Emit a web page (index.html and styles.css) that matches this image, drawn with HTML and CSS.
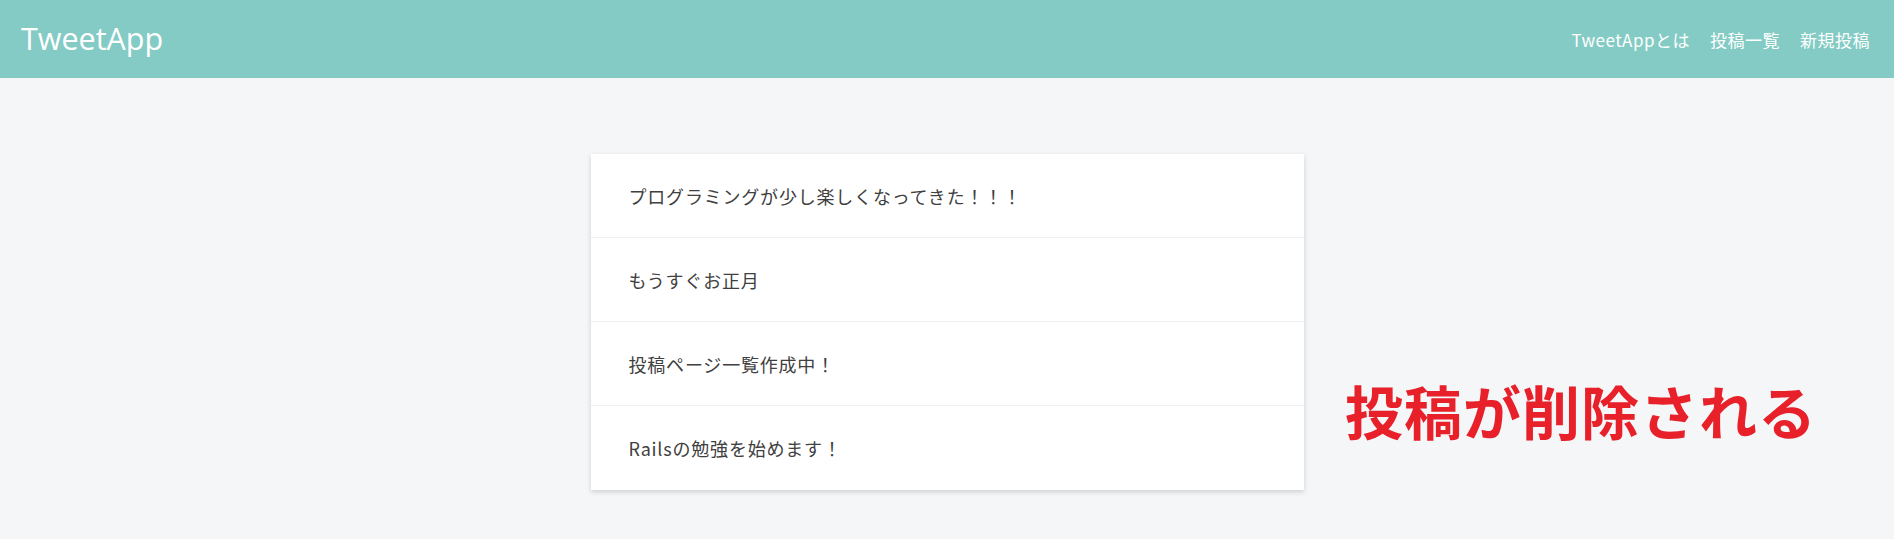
FILE: index.html
```html
<!DOCTYPE html>
<html lang="ja">
<head>
<meta charset="utf-8">
<title>TweetApp</title>
<link rel="stylesheet" href="styles.css">
</head>
<body>
<header class="header">
  <div class="logo">TweetApp</div>
  <nav class="nav">
    <a class="nav-item" href="#">TweetAppとは</a>
    <a class="nav-item" href="#">投稿一覧</a>
    <a class="nav-item" href="#">新規投稿</a>
  </nav>
</header>
<main class="main">
  <div class="posts">
    <div class="post">プログラミングが少し楽しくなってきた！！！</div>
    <div class="post">もうすぐお正月</div>
    <div class="post">投稿ページ一覧作成中！</div>
    <div class="post">Railsの勉強を始めます！</div>
  </div>
  <div class="note">投稿が削除される</div>
</main>
</body>
</html>
```

FILE: styles.css
```css
html, body {
  margin: 0;
  padding: 0;
}
body {
  background: #f5f6f8;
  font-family: "Open Sans", "Noto Sans CJK JP", sans-serif;
  color: #3a3a3a;
  height: 539px;
  overflow: hidden;
}
.header {
  height: 78px;
  background: #83cbc4;
  display: flex;
  align-items: center;
  justify-content: space-between;
  padding: 0 24px 0 21px;
}
.logo {
  color: #fff;
  font-size: 30.5px;
  line-height: 1;
  margin-top: -2px;
}
.nav {
  display: flex;
  gap: 20px;
}
.nav-item {
  color: #fff;
  text-decoration: none;
  font-size: 17px;
  letter-spacing: 0.5px;
  font-family: "Noto Sans CJK JP", sans-serif;
}
.main {
  position: relative;
  padding-top: 76px;
  display: flex;
  justify-content: center;
}
.posts {
  width: 713px;
  background: #fff;
  box-shadow: 0 2px 5px rgba(0, 0, 0, 0.16);
}
.post {
  height: 84px;
  box-sizing: border-box;
  display: flex;
  align-items: center;
  padding-left: 38px;
  font-size: 18px;
  letter-spacing: 0.8px;
  font-family: "Noto Sans CJK JP", sans-serif;
  color: #404040;
  border-bottom: 1px solid #eef0f2;
}
.post:last-child {
  border-bottom: none;
}
.note {
  position: absolute;
  left: 1345px;
  top: 303px;
  color: #e8202a;
  font-family: "Noto Sans CJK JP", sans-serif;
  font-weight: 700;
  font-size: 58px;
  letter-spacing: 1px;
  line-height: 1;
}
```
